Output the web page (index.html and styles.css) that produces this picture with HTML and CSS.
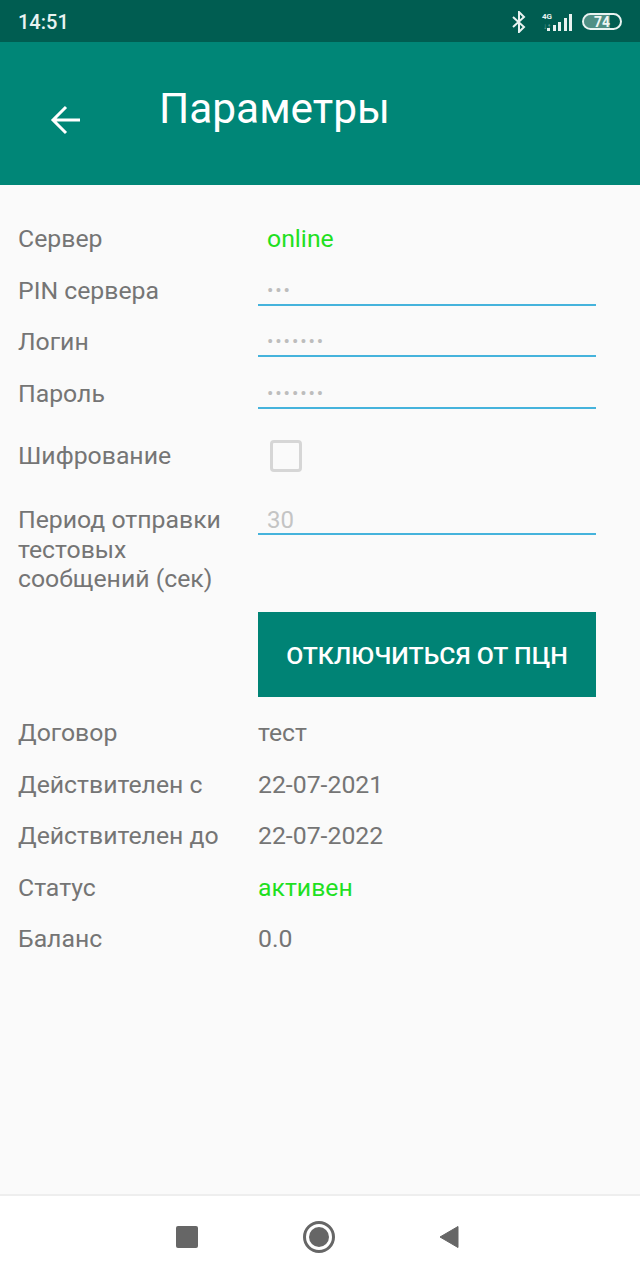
FILE: index.html
```html
<!DOCTYPE html>
<html lang="ru">
<head>
    <meta charset="UTF-8">
    <meta name="viewport" content="width=device-width, initial-scale=1.0">
    <title>Параметры</title>
    <link rel="stylesheet" href="styles.css">
</head>
<body>
    <div class="screen">
        <div class="status-bar">
            <span class="clock">14:51</span>
            <div class="status-icons">
                <svg class="bt-icon" width="14" height="22" viewBox="0 0 14 22" fill="none" stroke="#e8f3f1" stroke-width="2">
                    <path d="M1 6l11 10-5 5V1l5 5L1 16"/>
                </svg>
                <div class="signal">
                    <div class="net-labels"><span class="net-4g">4G</span><span class="net-arrows">↓↑</span></div>
                    <div class="bars">
                        <i class="bar-1"></i><i class="bar-2"></i><i class="bar-3"></i><i class="bar-4"></i><i class="bar-5"></i>
                    </div>
                </div>
                <div class="battery"><span>74</span></div>
            </div>
        </div>

        <header class="app-bar">
            <svg class="back-icon" width="32" height="32" viewBox="0 0 32 32" fill="none" stroke="#fff" stroke-width="3">
                <path d="M30 16H4M16 3L3 16l13 13"/>
            </svg>
            <h1>Параметры</h1>
        </header>

        <main class="content">
            <div class="row">
                <div class="label">Сервер</div>
                <div class="value online">online</div>
            </div>
            <div class="row">
                <div class="label">PIN сервера</div>
                <div class="field"><span class="dots">•••</span></div>
            </div>
            <div class="row">
                <div class="label">Логин</div>
                <div class="field"><span class="dots">•••••••</span></div>
            </div>
            <div class="row">
                <div class="label">Пароль</div>
                <div class="field"><span class="dots">•••••••</span></div>
            </div>
            <div class="row row-check">
                <div class="label">Шифрование</div>
                <div class="checkbox"></div>
            </div>
            <div class="row row-period">
                <div class="label">Период отправки тестовых сообщений (сек)</div>
                <div class="field"><span class="hint">30</span></div>
            </div>
            <div class="button-row">
                <button class="btn">ОТКЛЮЧИТЬСЯ ОТ ПЦН</button>
            </div>
            <div class="info">
                <div class="row">
                    <div class="label">Договор</div>
                    <div class="text">тест</div>
                </div>
                <div class="row">
                    <div class="label">Действителен с</div>
                    <div class="text">22-07-2021</div>
                </div>
                <div class="row">
                    <div class="label">Действителен до</div>
                    <div class="text">22-07-2022</div>
                </div>
                <div class="row">
                    <div class="label">Статус</div>
                    <div class="text active">активен</div>
                </div>
                <div class="row">
                    <div class="label">Баланс</div>
                    <div class="text">0.0</div>
                </div>
            </div>
        </main>

        <nav class="nav-bar">
            <div class="nav-square"></div>
            <div class="nav-circle"><div></div></div>
            <svg class="nav-back" width="20" height="24" viewBox="0 0 20 24"><path d="M19 1.5v21L1 12z" fill="#666" stroke="#666" stroke-linejoin="round"/></svg>
        </nav>
    </div>
</body>
</html>
```

FILE: styles.css
```css
* {
    box-sizing: border-box;
}
body {
    margin: 0;
    font-family: Roboto, "Noto Sans", sans-serif;
    background-color: #fafafa;
}
.screen {
    display: flex;
    flex-direction: column;
    height: 1280px;
    overflow: hidden;
}
.status-bar {
    display: flex;
    align-items: center;
    justify-content: space-between;
    height: 42px;
    padding: 1px 18px 0;
    background-color: #005d51;
    color: #e8f3f1;
}
.clock {
    font-size: 20px;
    font-weight: 500;
}
.status-icons {
    display: flex;
    align-items: center;
    gap: 10px;
}
.bt-icon {
    margin-right: 5px;
}
.signal {
    display: flex;
    align-items: flex-end;
}
.net-labels {
    display: flex;
    flex-direction: column;
    align-items: center;
    width: 12px;
    margin-right: -6px;
    line-height: 9.5px;
}
.net-4g {
    font-size: 8px;
    font-weight: 700;
}
.net-arrows {
    font-size: 8px;
    color: #7fb0a8;
}
.bars {
    display: flex;
    align-items: flex-end;
    gap: 2.5px;
}
.bars i {
    display: block;
    width: 3px;
    background-color: #e8f3f1;
}
.bar-1 { height: 3px; }
.bar-2 { height: 6px; }
.bar-3 { height: 9px; }
.bar-4 { height: 13px; }
.bar-5 { height: 17px; }
.battery {
    display: flex;
    align-items: center;
    justify-content: center;
    width: 40px;
    height: 17px;
    border: 2px solid #e8f3f1;
    border-radius: 9px;
    background: linear-gradient(to right, #4f8f84 0 72%, transparent 72%);
    background-clip: content-box;
}
.battery span {
    font-size: 14px;
    font-weight: 700;
    color: #eef6f4;
}
.app-bar {
    position: relative;
    height: 143px;
    padding: 40px 0 0 159px;
    background-color: #008677;
}
.back-icon {
    position: absolute;
    left: 50px;
    top: 62px;
}
.app-bar h1 {
    margin: 0;
    font-size: 42.4px;
    font-weight: 400;
    line-height: 54px;
    color: #fff;
}
.content {
    flex: 1;
    padding: 28px 44px 0 18px;
    color: #757575;
    font-size: 24.8px;
}
.row {
    display: flex;
    align-items: center;
    height: 51.5px;
}
.label {
    flex: none;
    width: 240px;
    padding-right: 10px;
}
.value {
    padding-left: 9px;
}
.online, .active {
    color: #1fe01f;
}
.field {
    flex: 1;
    align-self: flex-start;
    display: flex;
    align-items: center;
    height: 41px;
    padding: 12px 0 0 9px;
    border-bottom: 2px solid #45b3dc;
}
.dots {
    font-size: 19px;
    letter-spacing: 1.9px;
    color: #bdbdbd;
}
.hint {
    font-size: 24px;
    color: #c4c4c4;
}
.row-check {
    height: 73px;
}
.checkbox {
    width: 32px;
    height: 32px;
    margin-left: 12px;
    border: 3px solid #d6d6d6;
    border-radius: 4px;
}
.row-period {
    align-items: flex-start;
    height: 92px;
    margin-top: 1px;
}
.row-period .label {
    line-height: 29.5px;
    padding-top: 12px;
    padding-right: 14px;
}
.row-period .field {
    height: 42px;
    padding-top: 14px;
}
.button-row {
    display: flex;
    justify-content: flex-end;
    margin-top: 27px;
}
.btn {
    width: 338px;
    height: 85px;
    padding-top: 2px;
    border: none;
    background-color: #008375;
    color: #fff;
    font-family: inherit;
    font-size: 24.8px;
    font-weight: 500;
}
.info {
    margin-top: 10px;
}
.nav-bar {
    display: flex;
    align-items: center;
    justify-content: center;
    height: 86px;
    padding: 0 6px 3px 0;
    background-color: #fff;
    border-top: 2px solid #eeeeee;
}
.nav-square {
    width: 22px;
    height: 22px;
    margin-right: 105px;
    border-radius: 2px;
    background-color: #666;
}
.nav-circle {
    display: flex;
    align-items: center;
    justify-content: center;
    width: 32px;
    height: 32px;
    margin-right: 104px;
    border: 3px solid #666;
    border-radius: 50%;
}
.nav-circle div {
    width: 20px;
    height: 20px;
    border-radius: 50%;
    background-color: #666;
}
```
